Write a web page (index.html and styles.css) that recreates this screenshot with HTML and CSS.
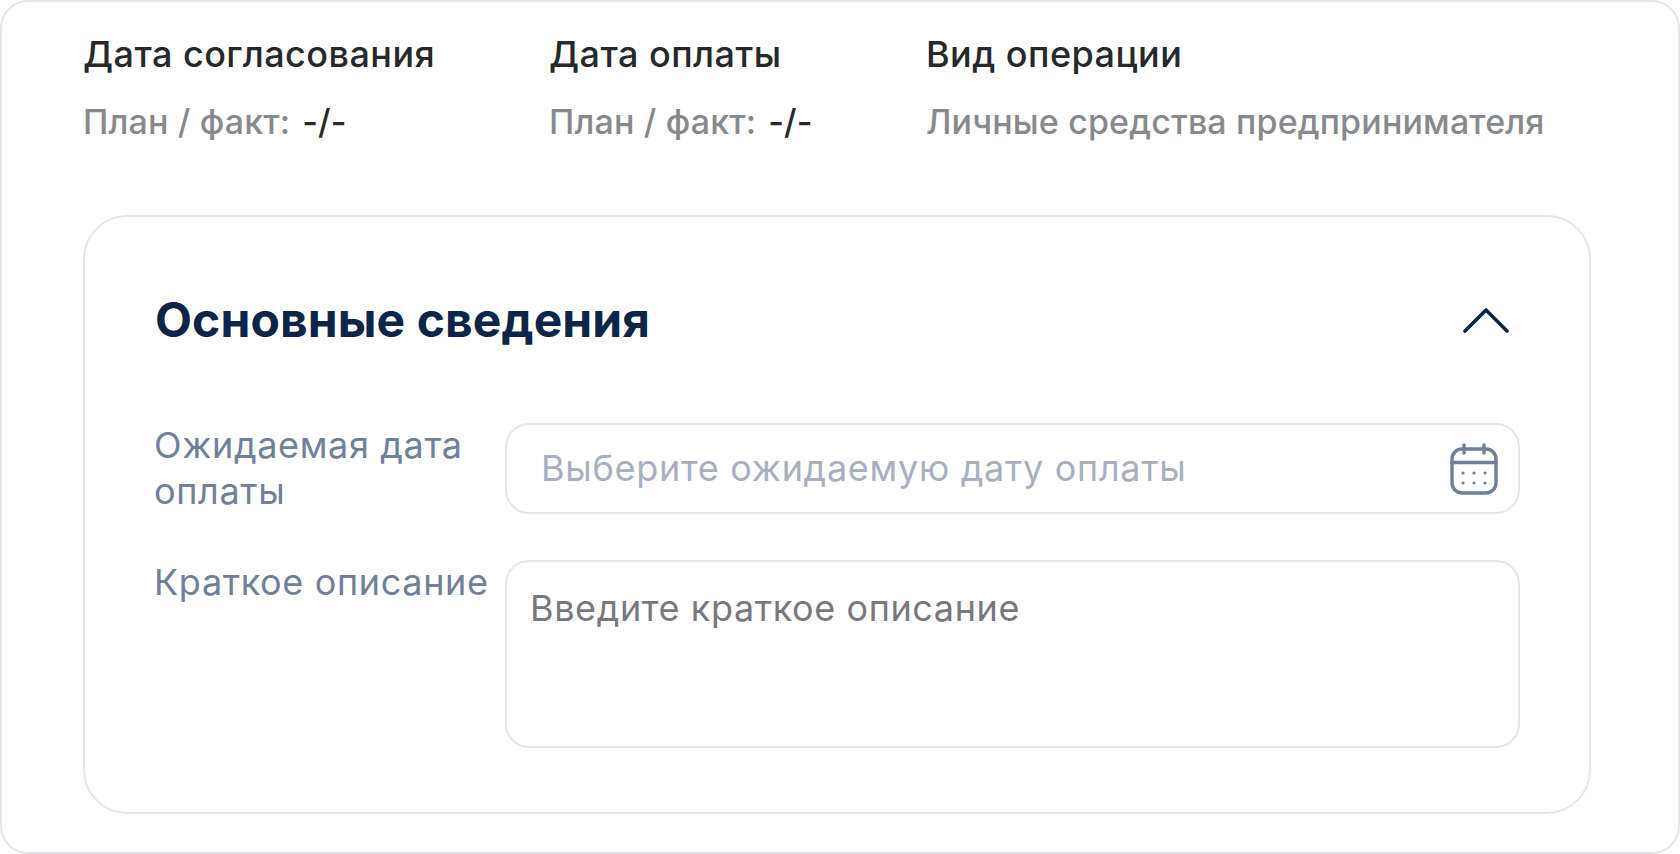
FILE: index.html
```html
<!DOCTYPE html>
<html lang="ru">
<head>
<meta charset="utf-8">
<title>Основные сведения</title>
<link rel="stylesheet" href="styles.css">
</head>
<body>
<main class="page">
  <section class="summary">
    <div class="col col-a">
      <div class="col-title">Дата согласования</div>
      <div class="col-sub">План / факт:<span class="val">-/-</span></div>
    </div>
    <div class="col col-b">
      <div class="col-title">Дата оплаты</div>
      <div class="col-sub">План / факт:<span class="val">-/-</span></div>
    </div>
    <div class="col">
      <div class="col-title">Вид операции</div>
      <div class="col-sub">Личные средства предпринимателя</div>
    </div>
  </section>
  <section class="panel">
    <header class="panel-head">
      <h2 class="panel-title">Основные сведения</h2>
      <svg class="chevron" viewBox="0 0 46 26" fill="none"><path d="M2 24 23 3l21 21" stroke="#0c2549" stroke-width="3.6" stroke-linecap="round" stroke-linejoin="round"/></svg>
    </header>
    <div class="row row-date">
      <div class="label">Ожидаемая дата оплаты</div>
      <div class="field field-date">
        <span class="ph-date">Выберите ожидаемую дату оплаты</span>
        <svg class="cal" viewBox="0 0 48 52" fill="none" stroke="#6f7f99" stroke-width="3.4" stroke-linecap="round">
          <rect x="2" y="6" width="44" height="44" rx="10"/>
          <path d="M2 19.5h44M14 2v8M34 2v8"/>
          <g stroke-width="3.2"><path d="M13 30h.01M24 30h.01M35 30h.01M13 40h.01M24 40h.01M35 40h.01"/></g>
        </svg>
      </div>
    </div>
    <div class="row">
      <div class="label">Краткое описание</div>
      <div class="field field-text">Введите краткое описание</div>
    </div>
  </section>
</main>
</body>
</html>
```
FILE: styles.css
```css
* { box-sizing: border-box; }
html, body { margin: 0; padding: 0; background: #fff; }
body { font-family: Inter, "Noto Sans", sans-serif; }
.page {
  width: 1680px;
  height: 854px;
  border: 2px solid #e4e6eb;
  border-radius: 28px;
  padding: 30px 87px 0 81px;
  overflow: hidden;
}
.summary { display: flex; height: 183px; }
.col-a { width: 466px; }
.col-b { width: 377px; }
.col-title { font-size: 36px; line-height: 44px; font-weight: 500; letter-spacing: 0.45px; color: #26282a; }
.col-sub { margin-top: 25px; font-size: 34px; line-height: 42px; font-weight: 450; letter-spacing: 0.15px; color: #87898c; display: flex; gap: 12px; }
.val { color: #26282a; }
.panel {
  height: 599px;
  border: 2px solid #e4e6eb;
  border-radius: 44px;
  padding: 72px 67px 0 69px;
}
.panel-head { display: flex; justify-content: space-between; align-items: center; height: 62px; margin-bottom: 72px; }
.panel-title { margin: 0 0 0 1px; font-size: 48px; line-height: 62px; font-weight: 700; letter-spacing: 0.1px; color: #0c2549; }
.chevron { width: 46px; height: 26px; margin-right: 13px; }
.row { display: flex; }
.row-date { margin-bottom: 46px; }
.label { width: 351px; margin-top: -1px; font-size: 36px; line-height: 46px; letter-spacing: 0.65px; color: #70809a; flex: none; }
.field { width: 1015px; border: 2px solid #e4e6eb; background: #fff; }
.field-date {
  height: 91px;
  border-radius: 24px;
  display: flex;
  align-items: center;
  justify-content: space-between;
  padding: 0 20px 2px 34px;
}
.ph-date { font-size: 36px; letter-spacing: 0.7px; color: #a8afc0; }
.cal { width: 48px; height: 52px; margin-bottom: -2px; }
.field-text {
  height: 188px;
  border-radius: 24px;
  padding: 23px 23px;
  font-size: 36px;
  line-height: 46px;
  letter-spacing: 0.6px;
  color: #77797c;
}
```
